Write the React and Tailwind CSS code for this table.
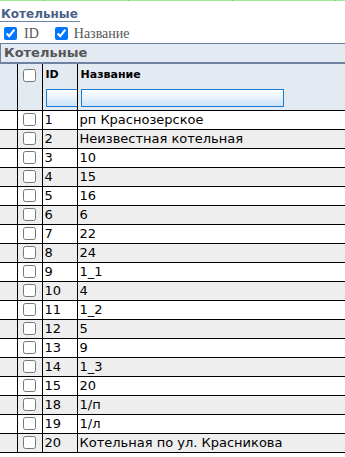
const rows = [
  ['1', 'рп Краснозерское'],
  ['2', 'Неизвестная котельная'],
  ['3', '10'],
  ['4', '15'],
  ['5', '16'],
  ['6', '6'],
  ['7', '22'],
  ['8', '24'],
  ['9', '1_1'],
  ['10', '4'],
  ['11', '1_2'],
  ['12', '5'],
  ['13', '9'],
  ['14', '1_3'],
  ['15', '20'],
  ['18', '1/п'],
  ['19', '1/л'],
  ['20', 'Котельная по ул. Красникова'],
];

function Box({ checked }) {
  return (
    <input
      type="checkbox"
      defaultChecked={checked}
      className="m-0 block h-[13px] w-[13px] accent-[#0075ff]"
    />
  );
}

export default function App() {
  return (
    <div className="h-[457px] w-[345px] overflow-hidden bg-white font-['DejaVu_Sans',Verdana,sans-serif] text-black">
      <div className="relative h-px bg-[#98ee98]">
        <span className="absolute left-[44px] top-0 h-px w-px bg-[#7cb87c]" />
        <span className="absolute left-[128px] top-0 h-px w-px bg-[#7cb87c]" />
        <span className="absolute left-[232px] top-0 h-px w-px bg-[#7cb87c]" />
        <span className="absolute left-[335px] top-0 h-px w-px bg-[#7cb87c]" />
      </div>

      <div className="flex h-[22px] items-start pt-[6px]">
        <div className="border-b border-[#6f82a0] pl-px pr-[2px] text-[12px] font-bold leading-[14px] text-[#4b6088]">
          Котельные
        </div>
      </div>

      <div className="flex h-[20px] items-start pl-[4px] pt-[4px] font-['Liberation_Serif',serif] text-[14px] leading-[14px] text-[#555]">
        <Box checked />
        <span className="ml-[7px]">ID</span>
        <span className="ml-[16px]">
          <Box checked />
        </span>
        <span className="ml-[6px]">Название</span>
      </div>

      <div className="w-[360px] bg-[#e4eaf2]">
        <div className="h-[21px] border-x border-t border-b-2 border-[#6f81a0] pl-[3px] text-[13px] font-bold leading-[18px] text-[#555]">
          Котельные
        </div>
        <table className="w-[360px] table-fixed border-collapse text-[13px]">
          <colgroup>
            <col className="w-[17px]" />
            <col className="w-[25px]" />
            <col className="w-[35px]" />
            <col className="w-[283px]" />
          </colgroup>
          <thead>
            <tr className="h-[22px] bg-[#e4eaf2]">
              <th className="border-r border-black p-0" />
              <th className="border-r border-black p-0">
                <div className="flex justify-center">
                  <Box />
                </div>
              </th>
              <th className="border-r border-black p-0 pl-[3px] text-left text-[11px] font-bold">ID</th>
              <th className="p-0 pl-[3px] text-left text-[11px] font-bold">Название</th>
            </tr>
            <tr className="h-[24px] bg-[#e4eaf2]">
              <th className="border-b border-r border-black p-0" />
              <th className="border-b border-r border-black p-0" />
              <th className="overflow-hidden border-b border-r border-black p-0 pl-[3px]">
                <div className="h-[18px] w-[40px] border border-[#1a7ad0] bg-gradient-to-b from-white to-[#cde3f8]" />
              </th>
              <th className="border-b border-black p-0 pl-[3px]">
                <div className="h-[18px] w-[203px] border border-[#1a7ad0] bg-gradient-to-b from-white to-[#cde3f8]" />
              </th>
            </tr>
          </thead>
          <tbody>
            {rows.map(([id, name], i) => (
              <tr key={id} className={`h-[19px] ${i % 2 ? 'bg-[#eeeeee]' : 'bg-white'}`}>
                <td className="border-b border-r border-black p-0" />
                <td className="border-b border-r border-black p-0">
                  <div className="flex justify-center">
                    <Box />
                  </div>
                </td>
                <td className="border-b border-r border-black p-0 pl-[2px] leading-[18px]">{id}</td>
                <td className="whitespace-nowrap border-b border-black p-0 pl-[2px] leading-[18px]">{name}</td>
              </tr>
            ))}
          </tbody>
        </table>
      </div>
    </div>
  );
}
